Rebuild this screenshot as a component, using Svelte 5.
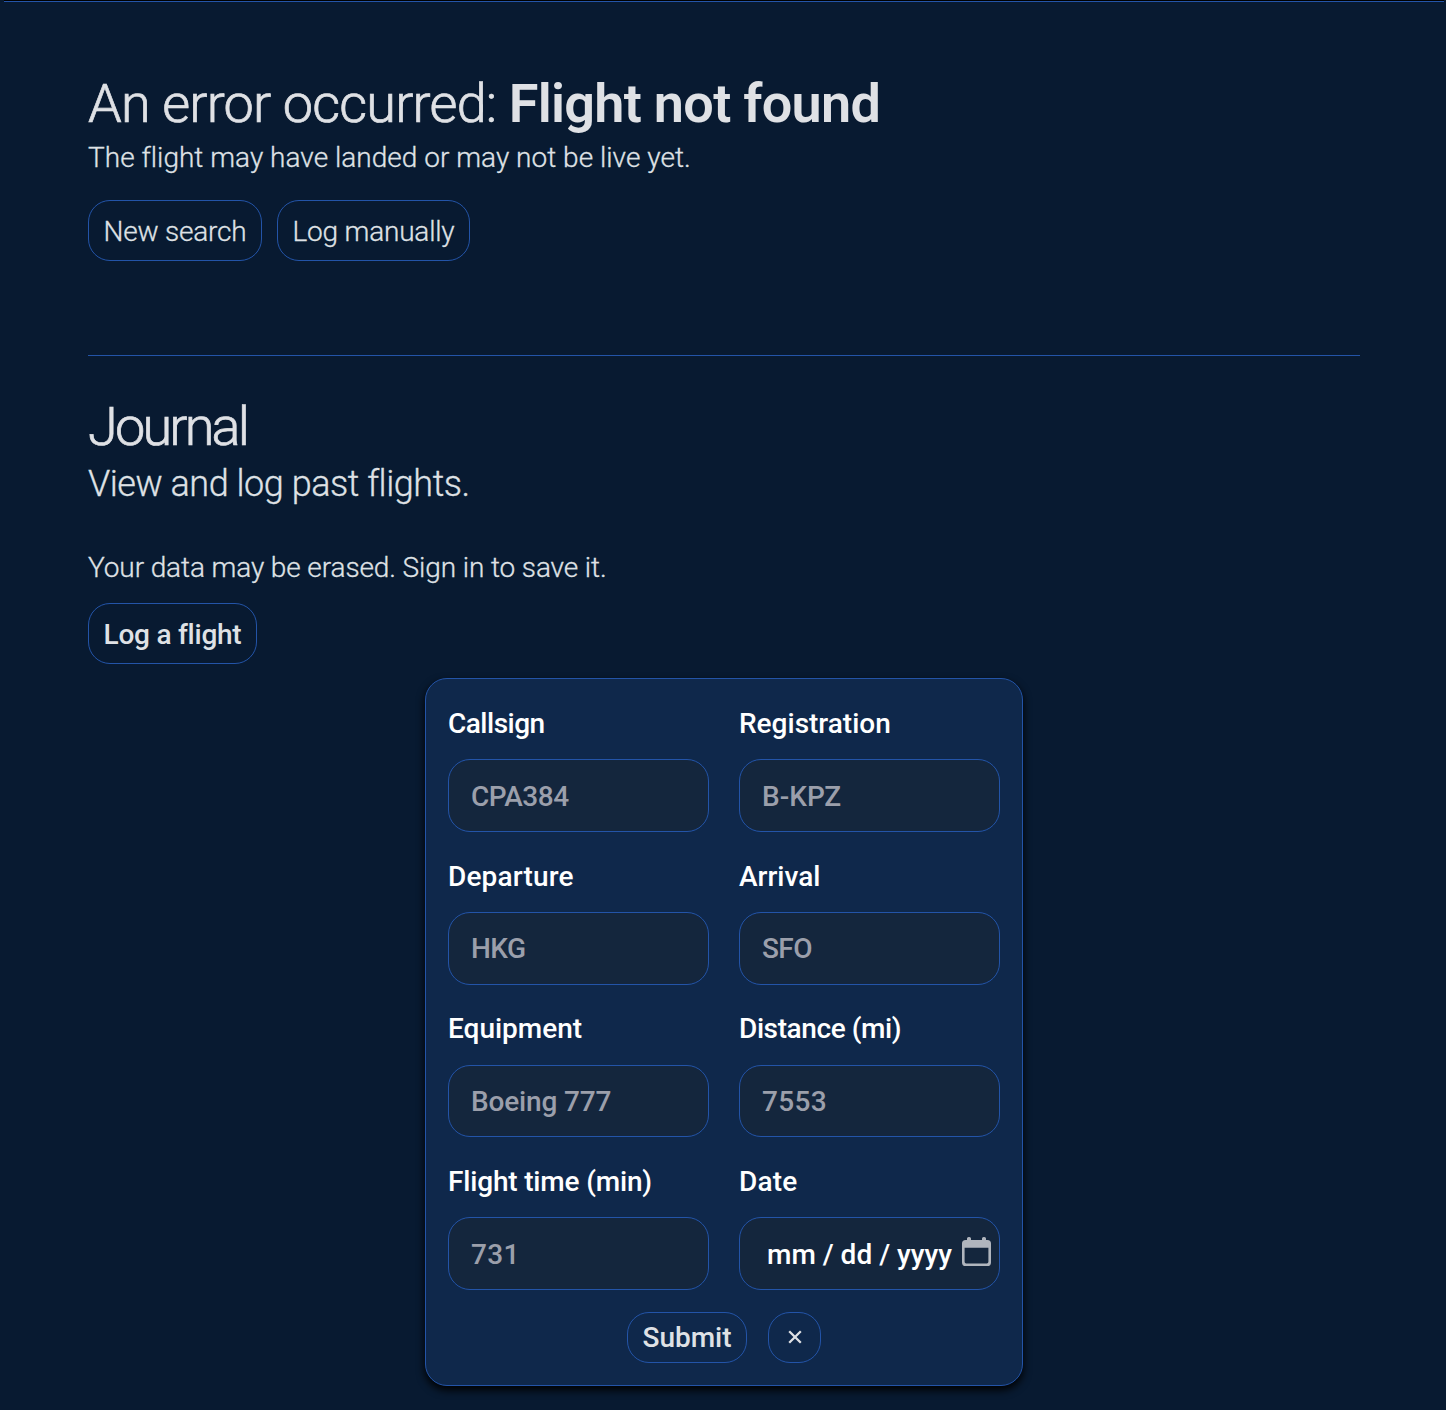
<script>
  const fields = [
    { id: 'callsign', label: 'Callsign', placeholder: 'CPA384' },
    { id: 'registration', label: 'Registration', placeholder: 'B-KPZ' },
    { id: 'departure', label: 'Departure', placeholder: 'HKG' },
    { id: 'arrival', label: 'Arrival', placeholder: 'SFO' },
    { id: 'equipment', label: 'Equipment', placeholder: 'Boeing 777' },
    { id: 'distance', label: 'Distance (mi)', placeholder: '7553' },
    { id: 'time', label: 'Flight time (min)', placeholder: '731' },
    { id: 'date', label: 'Date', date: true }
  ];
</script>

<div class="page">
  <div class="topline"></div>
  <section class="error">
    <h1>An error occurred: <strong>Flight not found</strong></h1>
    <p class="detail">The flight may have landed or may not be live yet.</p>
    <div class="actions">
      <button class="new">New search</button>
      <button class="manual">Log manually</button>
    </div>
  </section>

  <section class="journal">
    <h2>Journal</h2>
    <p class="lead">View and log past flights.</p>
    <p class="notice">Your data may be erased. Sign in to save it.</p>
    <button class="log">Log a flight</button>

    <form>
      <div class="grid">
        {#each fields as f}
          <div class="field {f.id}">
            <label for={f.id}>{f.label}</label>
            {#if f.date}
              <div class="box date-box" id={f.id}>
                <span>mm / dd / yyyy</span>
                <svg width="29" height="29" viewBox="0 0 29 29" aria-hidden="true">
                  <path fill="currentColor" fill-rule="evenodd" d="M5 3V1.6a1.6 1.6 0 0 1 1.6-1.6h.8A1.6 1.6 0 0 1 9 1.6V3h11V1.6A1.6 1.6 0 0 1 21.6 0h.8A1.6 1.6 0 0 1 24 1.6V3h1.4A3.6 3.6 0 0 1 29 6.6v18.8a3.6 3.6 0 0 1-3.6 3.6H3.6A3.6 3.6 0 0 1 0 25.4V6.6A3.6 3.6 0 0 1 3.6 3ZM2.6 10.7v14.1a1.6 1.6 0 0 0 1.6 1.6h20.6a1.6 1.6 0 0 0 1.6-1.6V10.7Z" />
                </svg>
              </div>
            {:else}
              <input class="box" id={f.id} type="text" placeholder={f.placeholder} />
            {/if}
          </div>
        {/each}
      </div>
      <div class="form-actions">
        <button type="button" class="submit">Submit</button>
        <button type="button" class="close" aria-label="Close">
          <svg width="14" height="14" viewBox="0 0 14 14" aria-hidden="true">
            <path d="M1.2 1.2 12.8 12.8M12.8 1.2 1.2 12.8" fill="none" stroke="currentColor" stroke-width="2.3" />
          </svg>
        </button>
      </div>
    </form>
  </section>
</div>

<style>
  :global(body) { background: #081a31; }
  .page {
    box-sizing: border-box;
    height: 1410px;
    overflow: hidden;
    background: #081a31;
    color: #dfe1e5;
    font-family: Roboto, "Liberation Sans", sans-serif;
    font-size: 28px;
    font-weight: 300;
    line-height: 44px;
  }
  .topline {
    height: 1px;
    margin: 0 2px 0 4px;
    background: #000;
    border-bottom: 1px solid #2354a8;
  }
  h1, h2, p { margin: 0; font-weight: 300; }
  p, .new, .manual { -webkit-text-stroke: 0.3px currentColor; }
  h1, h2 { font-size: 54px; line-height: 62px; -webkit-text-stroke: 0.7px currentColor; }
  h1 { letter-spacing: -0.8px; }
  h1 strong {
    font-weight: 600;
    letter-spacing: -0.72px;
    -webkit-text-stroke: 0;
  }
  h2 { letter-spacing: -2.8px; }
  .error {
    box-sizing: border-box;
    height: 354px;
    margin: 0 86px 0 88px;
    padding-top: 71px;
    border-bottom: 1px solid #2354a8;
  }
  .detail { padding-top: 1px; letter-spacing: 0.02px; }
  .actions { display: flex; gap: 15px; margin-top: 20px; }
  button {
    box-sizing: border-box;
    display: flex;
    align-items: center;
    justify-content: center;
    height: 61px;
    padding: 2px 0 0;
    border: 1px solid #2354a8;
    border-radius: 22px;
    background: transparent;
    color: inherit;
    font: inherit;
    white-space: nowrap;
  }
  .new { width: 174px; letter-spacing: -0.2px; }
  .manual { width: 193px; letter-spacing: -0.2px; }
  .log { width: 169px; margin-top: 13px; font-weight: 500; letter-spacing: -0.25px; }
  .journal { margin: 0 86px 0 88px; padding-top: 40px; }
  .lead { font-size: 36px; line-height: 52px; letter-spacing: -0.47px; }
  .notice { margin-top: 36px; letter-spacing: -0.11px; }
  form {
    box-sizing: border-box;
    width: 598px;
    margin: 14px auto 0;
    padding: 22.4px 22px 21.6px;
    border: 1px solid #2354a8;
    border-radius: 22px;
    background: #0f284b;
    box-shadow: 0 4px 9px #000;
    font-weight: 500;
  }
  .grid { display: grid; grid-template-columns: 261px 261px; gap: 22px 30px; }
  .field { display: flex; flex-direction: column; gap: 14px; }
  label { box-sizing: border-box; height: 44px; padding-top: 0.7px; color: #fff; }
  .box {
    box-sizing: border-box;
    width: 261px;
    height: 72.67px;
    padding: 1.2px 21px 0 22px;
    border: 1px solid #2354a8;
    border-radius: 22px;
    background: #14263d;
    color: #fff;
    font: inherit;
    letter-spacing: inherit;
    outline: none;
  }
  .box::placeholder { color: #9b9fab; opacity: 1; }
  .date-box {
    display: flex;
    align-items: center;
    justify-content: space-between;
    padding: 0 8px 0 27px;
    white-space: nowrap;
  }
  .date-box svg { flex: none; margin-bottom: 4px; color: #b0b5bd; }
  .date-box span { padding-top: 2px; }
  .callsign label { letter-spacing: -0.5px; }
  .callsign .box { letter-spacing: -0.45px; }
  .departure label { letter-spacing: 0.15px; }
  .departure .box, .arrival .box { letter-spacing: -0.6px; }
  .equipment .box { letter-spacing: -0.15px; }
  .distance label { letter-spacing: -0.4px; }
  .time label { letter-spacing: -0.17px; }
  .date label { letter-spacing: 0.2px; }
  .distance .box, .time .box { letter-spacing: 0.3px; }
  .form-actions { display: flex; justify-content: center; gap: 21px; margin-top: 22px; }
  .form-actions button { height: 51px; padding: 0; }
  .form-actions .submit { width: 120px; padding-top: 0.6px; }
  .form-actions .close { width: 53px; padding-bottom: 1px; }
</style>
